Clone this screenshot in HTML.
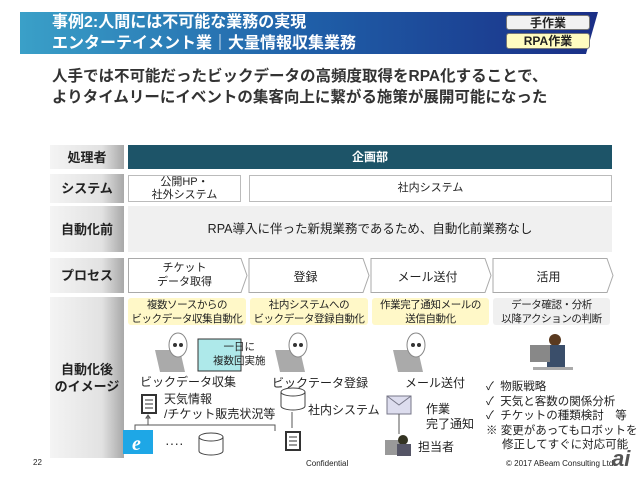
<!DOCTYPE html>
<html><head><meta charset="utf-8"><style>
*{margin:0;padding:0;box-sizing:border-box}
body{width:640px;height:480px;background:#fff;position:relative;overflow:hidden;font-family:"Liberation Sans","Noto Sans CJK JP",sans-serif;color:#222}
.a{position:absolute}
.lbl{position:absolute;left:50px;width:74px;background:linear-gradient(90deg,#f4f4f4,#e2e2e2 70%,#a8a8a8);font-weight:bold;font-size:13px;display:flex;align-items:center;justify-content:center;text-align:center;line-height:17px}
.box{position:absolute;background:#fff;border:1px solid #bbb;font-size:11px;display:flex;align-items:center;justify-content:center;text-align:center;line-height:13px}
.y{position:absolute;background:#fff8c8;border-radius:3px;font-size:10.5px;letter-spacing:-0.4px;text-align:center;line-height:14px;white-space:nowrap;overflow:hidden}
.t{position:absolute;font-size:12px;white-space:nowrap}
</style></head><body>
<svg class="a" style="left:20px;top:12px" width="580" height="42"><defs><linearGradient id="g" x1="0" x2="1"><stop offset="0" stop-color="#3aa0c8"/><stop offset="0.5" stop-color="#1f5fa8"/><stop offset="1" stop-color="#1a2e86"/></linearGradient></defs><polygon points="0,0 578,0 566,42 0,42" fill="url(#g)"/></svg>
<div class="a" style="left:52px;top:12px;color:#fff;font-weight:bold;font-size:16px;line-height:21px">事例2:人間には不可能な業務の実現<br>エンターテイメント業｜大量情報収集業務</div>
<div class="a" style="left:506px;top:15px;width:84px;height:15px;background:#f2f2f2;border:1px solid #777;border-radius:3px;font-size:12px;font-weight:bold;text-align:center;line-height:14px">手作業</div>
<div class="a" style="left:506px;top:33px;width:84px;height:16px;background:#fffcc0;border:1px solid #777;border-radius:3px;font-size:12px;font-weight:bold;text-align:center;line-height:15px">RPA作業</div>
<div class="a" style="left:52px;top:66px;font-size:15.5px;font-weight:bold;line-height:21px;color:#333">人手では不可能だったビックデータの高頻度取得をRPA化することで、<br>よりタイムリーにイベントの集客向上に繋がる施策が展開可能になった</div>

<div class="lbl" style="top:145px;height:24px">処理者</div>
<div class="a" style="left:128px;top:145px;width:484px;height:24px;background:#1d5468;color:#fff;font-weight:bold;font-size:12px;text-align:center;line-height:24px">企画部</div>
<div class="lbl" style="top:174px;height:29px">システム</div>
<div class="box" style="left:128px;top:175px;width:113px;height:27px">公開HP・<br>社外システム</div>
<div class="box" style="left:249px;top:175px;width:363px;height:27px">社内システム</div>
<div class="lbl" style="top:206px;height:46px">自動化前</div>
<div class="a" style="left:128px;top:206px;width:484px;height:46px;background:#f0f0f0;font-size:12.5px;text-align:center;line-height:46px">RPA導入に伴った新規業務であるため、自動化前業務なし</div>
<div class="lbl" style="top:258px;height:35px">プロセス</div>
<svg class="a" style="left:126px;top:257px" width="490" height="37">
<g fill="#fff" stroke="#aaa"><polygon points="2.5,1.5 115,1.5 121,18.5 115,35.5 2.5,35.5"/><polygon points="123,1.5 237,1.5 243,18.5 237,35.5 123,35.5"/><polygon points="245,1.5 359,1.5 365,18.5 359,35.5 245,35.5"/><polygon points="367,1.5 481,1.5 487,18.5 481,35.5 367,35.5"/></g></svg>
<div class="t" style="left:128px;top:261px;width:113px;text-align:center;font-size:11px;line-height:14px">チケット<br>データ取得</div>
<div class="t" style="left:249px;top:268px;width:113px;text-align:center">登録</div>
<div class="t" style="left:371px;top:268px;width:113px;text-align:center">メール送付</div>
<div class="t" style="left:492px;top:268px;width:113px;text-align:center">活用</div>
<div class="lbl" style="top:297px;height:161px">自動化後<br>のイメージ</div>
<div class="y" style="left:128px;top:298px;width:118px;height:27px">複数ソースからの<br>ビックデータ収集自動化</div>
<div class="y" style="left:250px;top:298px;width:118px;height:27px">社内システムへの<br>ビックデータ登録自動化</div>
<div class="y" style="left:372px;top:298px;width:117px;height:27px">作業完了通知メールの<br>送信自動化</div>
<div class="y" style="left:493px;top:298px;width:117px;height:27px;background:#f0f0f0">データ確認・分析<br>以降アクションの判断</div>

<svg class="a" style="left:0;top:0" width="640" height="480">
<g id="r"><polygon points="155,350 180,350 185,372 160,372" fill="#aaa"/><ellipse cx="178" cy="345" rx="9" ry="12" fill="#fff" stroke="#888"/><circle cx="175" cy="345" r="2" fill="#333"/><circle cx="181" cy="345" r="2" fill="#333"/></g>
<use href="#r" x="120"/><use href="#r" x="238"/>
<rect x="198" y="339" width="43" height="32" fill="#aee9ea" stroke="#333"/>
<rect x="142" y="395" width="14" height="18" fill="#fff" stroke="#333" stroke-width="2"/><path d="M145 400h8M145 404h8M145 408h8" stroke="#333"/>
<path d="M148 425v-10M148 415l-2 3h4zM135 431v-6h140v6" stroke="#555" fill="none"/>
<rect x="123" y="430" width="30" height="24" fill="#1ea7e6"/><text x="132" y="450" fill="#fff" font-size="20" font-style="italic" font-weight="bold" font-family="Liberation Serif">e</text>
<text x="165" y="448" font-size="14" fill="#333">····</text>
<path d="M199 437v14a12 4 0 0 0 24 0v-14" fill="#fff" stroke="#444"/><ellipse cx="211" cy="437" rx="12" ry="4" fill="#fff" stroke="#444"/>
<path d="M281 392v14a12 4 0 0 0 24 0v-14" fill="#fff" stroke="#444"/><ellipse cx="293" cy="392" rx="12" ry="4" fill="#fff" stroke="#444"/>
<path d="M292 428v-16" stroke="#555"/>
<rect x="286" y="432" width="14" height="18" fill="#fff" stroke="#333" stroke-width="2"/><path d="M289 437h8M289 441h8M289 445h8" stroke="#333"/>
<rect x="387" y="396" width="24" height="18" fill="#dde" stroke="#778"/><path d="M387 396l12 9 12-9" stroke="#778" fill="none"/>
<path d="M399 414v20" stroke="#555"/>
<polygon points="385,440 400,440 402,455 385,455" fill="#999"/><circle cx="403" cy="440" r="5" fill="#332"/><rect x="397" y="444" width="14" height="12" fill="#556"/>
<circle cx="555" cy="340" r="6" fill="#5a3a20"/><rect x="547" y="345" width="18" height="22" fill="#3a4e6a"/><polygon points="530,345 550,345 550,362 530,362" fill="#888"/><rect x="533" y="367" width="40" height="3" fill="#aaa"/>
</svg>
<div class="t" style="left:213px;top:340px;font-size:10.5px;line-height:14px;text-align:center">一日に<br>複数回実施</div>
<div class="t" style="left:140px;top:373px">ビックデータ収集</div>
<div class="t" style="left:164px;top:392px;line-height:15px">天気情報<br>/チケット販売状況等</div>
<div class="t" style="left:272px;top:374px">ビックテータ登録</div>
<div class="t" style="left:308px;top:401px">社内システム</div>
<div class="t" style="left:405px;top:374px">メール送付</div>
<div class="t" style="left:426px;top:402px;line-height:15px">作業<br>完了通知</div>
<div class="t" style="left:418px;top:438px">担当者</div>
<div class="t" style="left:486px;top:380px;font-size:11.5px;line-height:14.5px">✓&nbsp; 物販戦略<br>✓&nbsp; 天気と客数の関係分析<br>✓&nbsp; チケットの種類検討　等<br>※ 変更があってもロボットを<br>&nbsp;&nbsp;&nbsp;&nbsp;&nbsp;修正してすぐに対応可能</div>
<div class="t" style="left:33px;top:458px;font-size:8px">22</div>
<div class="t" style="left:306px;top:459px;font-size:8px">Confidential</div>
<div class="t" style="left:506px;top:459px;font-size:8px">© 2017 ABeam Consulting Ltd.</div>
<div class="t" style="left:612px;top:446px;font-size:22px;font-style:italic;font-weight:bold;color:#555">ai</div>
</body></html>
